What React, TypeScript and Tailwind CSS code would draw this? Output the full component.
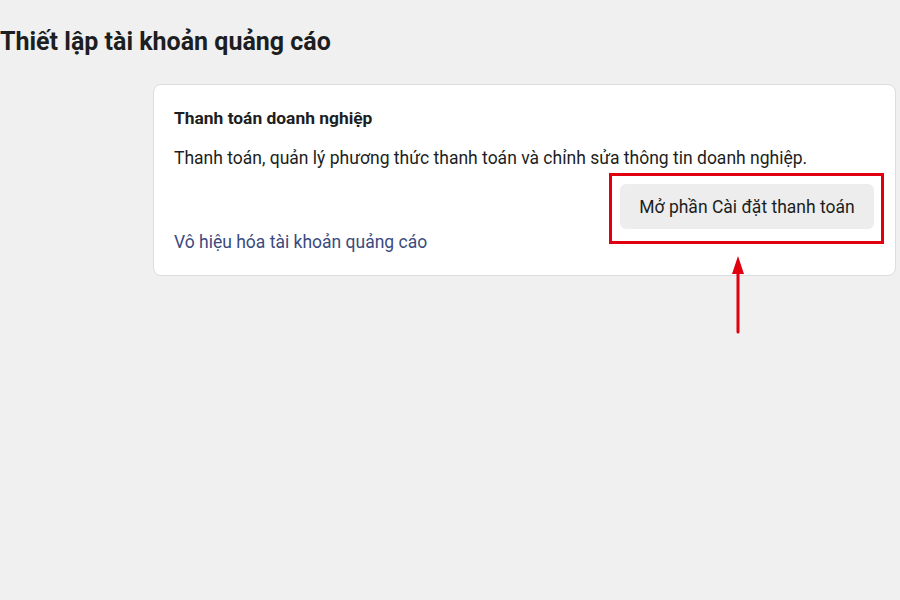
import React from 'react';

const App: React.FC = () => {
  return (
    <div
      className="min-h-[600px] w-[900px] bg-[#f0f0f0] text-[#1c1e21]"
      style={{ fontFamily: 'Roboto, "Noto Sans", sans-serif' }}
    >
      <h1 className="pt-[28px] text-[25px] font-bold leading-[28px]">
        Thiết lập tài khoản quảng cáo
      </h1>

      <div className="ml-[153px] mr-[4px] mt-[28px] rounded-[8px] border border-[#dcdde0] bg-white px-[20px] pb-[23px] pt-[23px]">
        <h2 className="text-[17.4px] font-bold leading-[20px]">Thanh toán doanh nghiệp</h2>
        <p className="mt-[20px] text-[17.5px] leading-[20px]">
          Thanh toán, quản lý phương thức thanh toán và chỉnh sửa thông tin doanh nghiệp.
        </p>

        <div className="mt-[16px] flex justify-end pr-[1px]">
          <div className="relative">
            <button className="h-[45px] w-[254px] rounded-[6px] bg-[#ededed] text-[17.5px] leading-[20px] text-[#1c1e21]">
              Mở phần Cài đặt thanh toán
            </button>
            {/* red highlight box */}
            <div className="pointer-events-none absolute -bottom-[15px] -left-[11px] -right-[10px] -top-[11px] border-[3px] border-[#e0000f]" />
            {/* arrow */}
            <svg
              className="pointer-events-none absolute left-[111px] top-[72px]"
              width="14"
              height="78"
              viewBox="0 0 14 78"
            >
              <polygon points="7,0 13,18 1,18" fill="#e0000f" />
              <line x1="7" y1="14" x2="7" y2="76" stroke="#e0000f" strokeWidth="3" strokeLinecap="round" />
            </svg>
          </div>
        </div>

        <a href="#" className="mt-[3px] block text-[17.5px] leading-[20px] text-[#3b4a7e]">
          Vô hiệu hóa tài khoản quảng cáo
        </a>
      </div>
    </div>
  );
};

export default App;
